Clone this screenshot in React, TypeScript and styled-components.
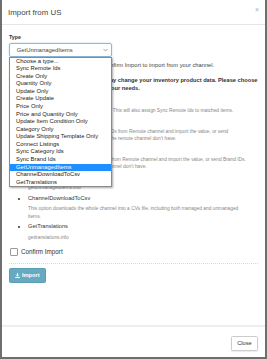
import React, { useEffect, useRef } from 'react';
import styled, { createGlobalStyle } from 'styled-components';

const Global = createGlobalStyle`
  html, body { margin: 0; padding: 0; }
  body {
    background: #6e6e6e;
    font-family: "Liberation Sans", Arial, sans-serif;
    color: #333;
  }
`;

const Page = styled.div`
  width: 267px;
  height: 359px;
  overflow: hidden;
  padding-left: 2px;
  box-sizing: border-box;
`;

const Modal = styled.div`
  width: 263px;
  height: 357px;
  background: #fff;
  display: flex;
  flex-direction: column;
`;

const Header = styled.div`
  height: 24px;
  border-bottom: 1px solid #e5e5e5;
  display: flex;
  align-items: center;
  justify-content: space-between;
  padding: 0 6px 0 6px;
`;

const Title = styled.div`
  font-size: 7.9px;
  color: #444;
  margin-top: 1px;
`;

const CloseX = styled.span`
  font-size: 7px;
  color: #aaa;
  line-height: 1;
  margin-top: -5px;
`;

const Body = styled.div`
  flex: 1;
  padding: 9px 7px 0 7px;
  display: flex;
  flex-direction: column;
  align-items: stretch;
`;

const Label = styled.div`
  font-size: 5.3px;
  font-weight: bold;
  line-height: 7px;
  margin-bottom: 1.5px;
`;

const SelectWrap = styled.div`
  position: relative;
  width: 103px;
`;

const SelectBox = styled.div`
  height: 14px;
  box-sizing: border-box;
  border: 1px solid #8fb7d8;
  border-radius: 2px;
  box-shadow: 0 0 2px rgba(102, 175, 233, 0.5);
  display: flex;
  align-items: center;
  justify-content: space-between;
  padding: 0 3px 0 6.7px;
  font-size: 5.9px;
  color: #444;
`;

const Chevron = styled.svg`
  width: 5px;
  height: 4px;
`;

const List = styled.ul`
  position: absolute;
  top: 14px;
  left: 0;
  width: 103px;
  box-sizing: border-box;
  margin: 0;
  padding: 0;
  list-style: none;
  background: #fff;
  border: 1px solid #8a8a8a;
  box-shadow: 1px 1px 2px rgba(0, 0, 0, 0.35);
  z-index: 5;
`;

const Option = styled.li<{ $active?: boolean }>`
  font-size: 5.85px;
  line-height: 7.58px;
  height: 7.58px;
  padding-left: 6px;
  white-space: nowrap;
  color: ${(p) => (p.$active ? '#fff' : '#222')};
  background: ${(p) => (p.$active ? '#1e8fff' : 'transparent')};
`;

const Intro = styled.div`
  font-size: 5.75px;
  line-height: 7px;
  color: #444;
  margin-top: 5.5px;
  white-space: nowrap;
`;

const Warning = styled.div`
  font-size: 5.7px;
  line-height: 8px;
  font-weight: bold;
  color: #333;
  margin-top: 6.5px;
  white-space: nowrap;
`;

const Scroller = styled.div`
  margin-top: 11px;
  height: 141px;
  overflow-y: scroll;
  &::-webkit-scrollbar { width: 5px; }
  &::-webkit-scrollbar-track { background: #f1f1f1; }
  &::-webkit-scrollbar-thumb { background: #8a8a8a; }
`;

const Guide = styled.ul`
  margin: 0;
  padding: 0 0 0 19px;
  list-style: disc;
`;

const GuideItem = styled.li`
  margin-bottom: 2.35px;
  font-size: 5.7px;
  color: #333;
`;

const GuideTitle = styled.div`
  line-height: 8px;
  font-size: 5.7px;
`;

const GuideDesc = styled.div`
  margin-top: 3.35px;
  font-size: 4.85px;
  line-height: 7.3px;
  color: #888;
  white-space: nowrap;
`;

const ConfirmRow = styled.label`
  margin-top: 3px;
  height: 10px;
  display: flex;
  align-items: center;
  gap: 3px;
  padding-left: 1px;
  font-size: 6.3px;
  color: #333;
`;

const Box = styled.span`
  width: 8px;
  height: 8px;
  box-sizing: border-box;
  border: 1px solid #9a9a9a;
  border-radius: 1px;
  background: #fff;
`;

const Dotted = styled.div`
  margin-top: 6px;
  border-top: 1px dotted #d8d8d8;
`;

const ImportButton = styled.button`
  margin-top: 4px;
  align-self: flex-start;
  height: 15px;
  width: 37px;
  border: 1px solid #5a9db4;
  border-radius: 1.5px;
  background: #66a9c0;
  color: #fff;
  font-family: "Liberation Sans", Arial, sans-serif;
  font-size: 5.7px;
  font-weight: bold;
  display: flex;
  align-items: center;
  justify-content: center;
  gap: 1.5px;
  padding: 0;
`;

const Footer = styled.div`
  border-top: 2px solid #eeeeee;
  height: 30px;
  display: flex;
  align-items: center;
  justify-content: flex-end;
  padding: 0 7px 0 0;
`;

const CloseButton = styled.button`
  width: 27px;
  height: 15px;
  margin-top: 2px;
  border: 1px solid #ccc;
  border-radius: 1.5px;
  background: #fff;
  box-shadow: 0 1px 1px rgba(0, 0, 0, 0.08);
  font-family: "Liberation Sans", Arial, sans-serif;
  font-size: 5.7px;
  color: #333;
  padding: 0;
`;

const options = [
  'Choose a type...',
  'Sync Remote Ids',
  'Create Only',
  'Quantity Only',
  'Update Only',
  'Create Update',
  'Price Only',
  'Price and Quantity Only',
  'Update Item Condition Only',
  'Category Only',
  'Update Shipping Template Only',
  'Connect Listings',
  'Sync Category Ids',
  'Sync Brand Ids',
  'GetUnmanagedItems',
  'ChannelDownloadToCsv',
  'GetTranslations',
];

const guides: { title: string; lines: string[] }[] = [
  {
    title: 'Sync Remote Ids',
    lines: ['Matches items in your inventory with items on the remote channel by SKU', 'and assigns Sync Remote Ids to the matched items.'],
  },
  {
    title: 'Create Only',
    lines: ['Creates items that exist on the remote channel but not in your inventory.', 'Existing items are not changed.'],
  },
  {
    title: 'Quantity Only',
    lines: ['Updates only the quantity of items that already exist in your inventory.', 'No new items are created.'],
  },
  {
    title: 'Update Only',
    lines: ['Updates items that already exist in your inventory.', 'No new items are created.'],
  },
  {
    title: 'Create Update',
    lines: ['Creates new items and updates items that already exist.', 'Both managed and unmanaged items are imported.'],
  },
  {
    title: 'Price Only',
    lines: ['Updates only the price of items that already exist.', 'No new items are created.'],
  },
  { title: 'Price and Quantity Only', lines: ['Updates only the price and quantity of existing items.'] },
  { title: 'Update Item Condition Only', lines: ['Updates only the item condition of existing items.'] },
  {
    title: 'Category Only',
    lines: ['Updates only the category of existing items.', 'No new items are created.'],
  },
  { title: 'Update Shipping Template Only', lines: ['Updates only the shipping template of existing items.'] },
  {
    title: 'Connect Listings',
    lines: ['Connects listings on a remote channel. This will also assign Sync Remote Ids to matched items.'],
  },
  {
    title: 'Sync Category Ids',
    lines: [
      'This option will synchronize Category IDs from Remote channel and import the value, or send',
      'Category IDs from your inventory that the remote channel don\u2019t have.',
    ],
  },
  {
    title: 'Sync Brand Ids',
    lines: [
      'This option will synchronize Brand IDs from Remote channel and import the value, or send Brand IDs.',
      'from your inventory that the remote channel don\u2019t have.',
    ],
  },
  { title: 'GetUnmanagedItems', lines: ['getunmanageditems.info'] },
  {
    title: 'ChannelDownloadToCsv',
    lines: ['This option downloads the whole channel into a CVs file, including both managed and unmanaged', 'items.'],
  },
  { title: 'GetTranslations', lines: ['gettranslations.info'] },
];

export default function App() {
  const scrollRef = useRef<HTMLDivElement>(null);
  useEffect(() => {
    const el = scrollRef.current;
    if (el) el.scrollTop = el.scrollHeight;
  }, []);

  return (
    <Page>
      <Global />
      <Modal>
        <Header>
          <Title>Import from US</Title>
          <CloseX>×</CloseX>
        </Header>
        <Body>
          <Label>Type</Label>
          <SelectWrap>
            <SelectBox>
              <span>GetUnmanagedItems</span>
              <Chevron viewBox="0 0 10 6">
                <path d="M1 1 L5 5 L9 1" fill="none" stroke="#666" strokeWidth="1.2" />
              </Chevron>
            </SelectBox>
            <List>
              {options.map((o) => (
                <Option key={o} $active={o === 'GetUnmanagedItems'}>
                  {o}
                </Option>
              ))}
            </List>
          </SelectWrap>
          <Intro>Select an import type, and then click Confirm Import to import from your channel.</Intro>
          <Warning>
            Warning: Some of the import types may change your inventory product data. Please choose
            <br />
            the correct import type that best fits your needs.
          </Warning>
          <Scroller ref={scrollRef}>
            <Guide>
              {guides.map((g) => (
                <GuideItem key={g.title}>
                  <GuideTitle>{g.title}</GuideTitle>
                  <GuideDesc>
                    {g.lines.map((l, i) => (
                      <div key={i}>{l}</div>
                    ))}
                  </GuideDesc>
                </GuideItem>
              ))}
            </Guide>
          </Scroller>
          <ConfirmRow>
            <Box />
            Confirm Import
          </ConfirmRow>
          <Dotted />
          <ImportButton>
            <svg width="5" height="5" viewBox="0 0 10 10">
              <path d="M5 0 V6 M2.5 3.5 L5 6.5 L7.5 3.5" fill="none" stroke="#fff" strokeWidth="1.8" />
              <rect x="0.5" y="8" width="9" height="2" fill="#fff" />
            </svg>
            Import
          </ImportButton>
        </Body>
        <Footer>
          <CloseButton>Close</CloseButton>
        </Footer>
      </Modal>
    </Page>
  );
}
